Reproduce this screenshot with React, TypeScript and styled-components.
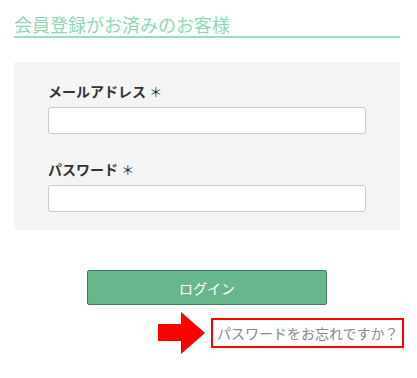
import * as React from 'react';
import styled, { createGlobalStyle } from 'styled-components';

const GlobalStyle = createGlobalStyle`
  body {
    margin: 0;
    background: #ffffff;
    font-family: "Noto Sans CJK JP", "Noto Sans", sans-serif;
  }
`;

export default function App() {
  return (
    <>
      <GlobalStyle />
      <StyleLogin>
        <h2 className="Login_title">会員登録がお済みのお客様</h2>
        <div className="Login_box">
          <label className="Login_label">
            メールアドレス <span className="Login_required">＊</span>
          </label>
          <input className="Login_input" type="text" />
          <label className="Login_label Login_label--next">
            パスワード <span className="Login_required">＊</span>
          </label>
          <input className="Login_input" type="password" />
        </div>
        <div className="Login_actions">
          <button className="Login_button">ログイン</button>
        </div>
        <div className="Login_forgot">
          <svg className="Login_arrow" width="47" height="42" viewBox="0 0 47 42">
            <path d="M0 12 H23 V0 L47 21 L23 42 V29 H0 Z" fill="#ff0000" />
          </svg>
          <a className="Login_forgot-link" href="#">パスワードをお忘れですか？</a>
        </div>
      </StyleLogin>
    </>
  );
}

const StyleLogin = styled.div`
  width: 386px;
  padding: 0 17px 0 14px;
  display: flex;
  flex-direction: column;

  .Login_title {
    margin: 0;
    padding-top: 12px;
    font-size: 18px;
    font-weight: normal;
    line-height: 24px;
    color: #8fd8b5;
    border-bottom: 2px solid #9fdcc8;
  }

  .Login_box {
    margin-top: 24px;
    background: #f4f4f4;
    padding: 19px 34px 18px;
    display: flex;
    flex-direction: column;
  }

  .Login_label {
    font-size: 14px;
    font-weight: bold;
    line-height: 20px;
    color: #333333;
    margin-bottom: 5px;
  }

  .Login_label--next {
    margin-top: 25px;
  }

  .Login_required {
    font-weight: normal;
    font-size: 13px;
  }

  .Login_input {
    box-sizing: border-box;
    height: 27px;
    width: 100%;
    border: 1px solid #cccccc;
    border-radius: 3px;
    background: #ffffff;
    outline: none;
  }

  .Login_actions {
    margin-top: 40px;
    display: flex;
    justify-content: center;
  }

  .Login_button {
    width: 240px;
    height: 35px;
    background: #67b68c;
    border: 1px solid #44785b;
    border-radius: 2px;
    color: #ffffff;
    font-family: "Noto Sans CJK JP", sans-serif;
    font-size: 14px;
  }

  .Login_forgot {
    margin-top: 7px;
    margin-right: -4px;
    display: flex;
    flex-direction: row;
    justify-content: flex-end;
    align-items: center;
    gap: 6px;
  }

  .Login_arrow {
    display: block;
  }

  .Login_forgot-link {
    box-sizing: border-box;
    height: 30px;
    width: 193px;
    border: 2px solid #ff0000;
    padding-left: 4px;
    display: flex;
    align-items: center;
    font-size: 14px;
    color: #8a8a8a;
    text-decoration: none;
    white-space: nowrap;
  }
`;
